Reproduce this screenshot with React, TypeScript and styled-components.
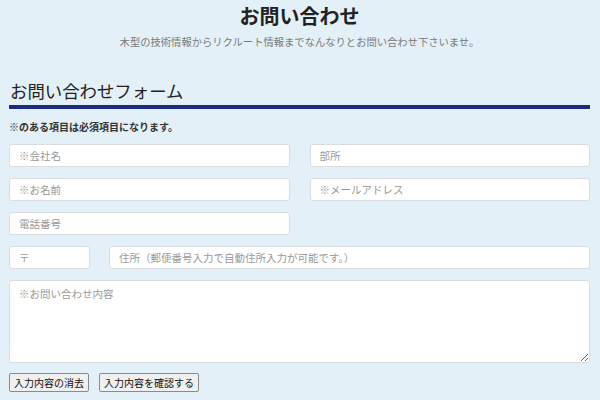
import styled, { createGlobalStyle } from 'styled-components'

const GlobalStyle = createGlobalStyle`
  html, body {
    margin: 0;
    padding: 0;
    background: #e3f0f7;
  }
  body {
    font-family: "Noto Sans CJK JP", "Noto Sans", sans-serif;
    color: #222;
  }
`

const Page = styled.div`
  width: 600px;
  height: 400px;
  box-sizing: border-box;
  padding: 4px 10px 0 9px;
  overflow: hidden;
`

const Header = styled.header`
  text-align: center;
`

const Title = styled.h1`
  margin: 0;
  font-size: 20px;
  line-height: 24px;
  font-weight: 700;
  color: #222;
`

const Lead = styled.p`
  margin: 7px 0 0;
  font-size: 10.3px;
  line-height: 14px;
  color: #7a7a7a;
`

const FormTitle = styled.h2`
  margin: 31px 0 0;
  padding: 0 0 3px 1px;
  font-size: 17.4px;
  line-height: 22px;
  font-weight: 400;
  color: #222;
  border-bottom: 4px solid #1b2d78;
`

const Note = styled.p`
  margin: 11px 0 0;
  font-size: 10px;
  line-height: 14px;
  font-weight: 700;
  color: #333;
`

const Fields = styled.div`
  margin-top: 10px;
  display: grid;
  grid-template-columns: 1fr 1fr;
  column-gap: 20px;
  row-gap: 11px;
`

const Row = styled.div<{ $full?: boolean }>`
  display: flex;
  gap: 19px;
  grid-column: ${p => (p.$full ? '1 / -1' : 'auto')};
`

const Input = styled.input<{ $w?: number }>`
  box-sizing: border-box;
  height: 23px;
  width: ${p => (p.$w ? `${p.$w}px` : '100%')};
  flex: ${p => (p.$w ? 'none' : '1')};
  padding: 0 9px;
  border: 1px solid #d9dde0;
  border-radius: 3px;
  background: #fff;
  font-family: inherit;
  font-size: 10.5px;
  &::placeholder {
    color: #999;
  }
`

const TextArea = styled.textarea`
  box-sizing: border-box;
  grid-column: 1 / -1;
  width: 100%;
  height: 83px;
  padding: 5px 9px;
  border: 1px solid #d9dde0;
  border-radius: 3px;
  background: #fff;
  font-family: inherit;
  font-size: 10.5px;
  &::placeholder {
    color: #999;
  }
`

const Buttons = styled.div`
  margin-top: 10px;
  display: flex;
  gap: 10px;
`

const Button = styled.button`
  height: 19px;
  padding: 0 4px;
  border: 1px solid #8a8a8a;
  border-radius: 2px;
  background: #f0f0f0;
  font-family: inherit;
  font-size: 10px;
  line-height: 17px;
  color: #111;
`

export default function App() {
  return (
    <>
      <GlobalStyle />
      <Page>
        <Header>
          <Title>お問い合わせ</Title>
          <Lead>木型の技術情報からリクルート情報までなんなりとお問い合わせ下さいませ。</Lead>
        </Header>
        <FormTitle>お問い合わせフォーム</FormTitle>
        <Note>※のある項目は必須項目になります。</Note>
        <Fields>
          <Input placeholder="※会社名" />
          <Input placeholder="部所" />
          <Input placeholder="※お名前" />
          <Input placeholder="※メールアドレス" />
          <Input placeholder="電話番号" />
          <div />
          <Row $full>
            <Input $w={81} placeholder="〒" />
            <Input placeholder="住所（郵便番号入力で自動住所入力が可能です。）" />
          </Row>
          <TextArea placeholder="※お問い合わせ内容" />
        </Fields>
        <Buttons>
          <Button type="button">入力内容の消去</Button>
          <Button type="button">入力内容を確認する</Button>
        </Buttons>
      </Page>
    </>
  )
}
